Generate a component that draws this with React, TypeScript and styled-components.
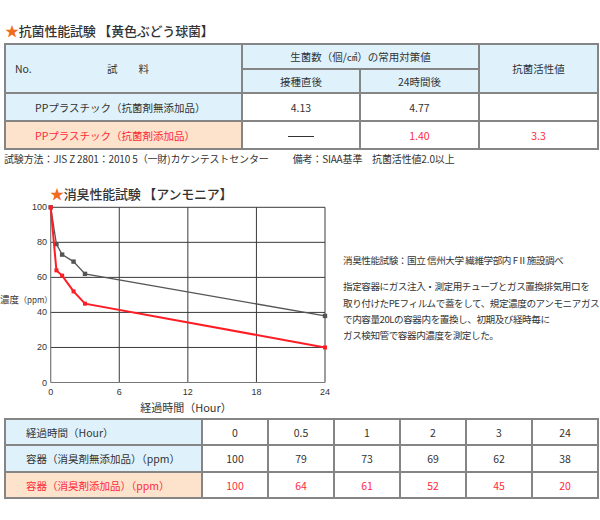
import React from "react";
import styled, { createGlobalStyle } from "styled-components";

const Global = createGlobalStyle`
  html, body { margin: 0; padding: 0; background: #fff; }
  body { font-family: "Noto Sans CJK JP", "Noto Sans", sans-serif; color: #333; }
`;

const RED = "#ff2a3c";
const BLUE = "#dff2fb";
const ORANGE = "#fde3cb";
const BORDER = "#858585";

const Page = styled.div`
  width: 600px;
  height: 520px;
  display: flex;
  flex-direction: column;
  overflow: hidden;
`;

const Title = styled.div<{ $indent: number; $top: number }>`
  margin: ${(p) => p.$top}px 0 0 ${(p) => p.$indent}px;
  height: 20px;
  line-height: 20px;
  font-size: 13px;
  letter-spacing: -0.2px;
  font-weight: 500;
  color: #333;
  white-space: nowrap;
`;

const Star = styled.span`
  color: #f26a1b;
  font-size: 14px;
`;

const Table = styled.table<{ $top: number; $w: number }>`
  margin: ${(p) => p.$top}px 0 0 4px;
  width: ${(p) => p.$w}px;
  border-collapse: collapse;
  table-layout: fixed;
  font-size: 10.5px;
  color: #333;
  & td, & th {
    border: 2px solid ${BORDER};
    padding: 0;
    font-weight: 400;
    text-align: center;
    white-space: nowrap;
  }
`;

const Cell = styled.td<{ $bg?: string; $red?: boolean; $left?: number; $h?: number }>`
  background: ${(p) => p.$bg || "#fff"};
  color: ${(p) => (p.$red ? RED : "#333")};
  height: ${(p) => (p.$h ? `${p.$h}px` : "auto")};
  && {
    text-align: ${(p) => (p.$left !== undefined ? "left" : "center")};
    padding-left: ${(p) => p.$left ?? 0}px;
  }
`;

const HeadSplit = styled.div`
  display: grid;
  grid-template-columns: 1fr auto 1fr;
  align-items: center;
  padding-left: 9px;
  & > span:first-child { justify-self: start; }
`;

const Dash = styled.span`
  display: inline-block;
  width: 26px;
  height: 1px;
  background: #333;
  vertical-align: middle;
`;

const Note = styled.div`
  margin: 1px 0 0 4px;
  height: 16px;
  line-height: 16px;
  font-size: 10px;
  letter-spacing: -0.15px;
  white-space: nowrap;
  display: flex;
  gap: 24px;
`;

const ChartRow = styled.div`
  display: flex;
  align-items: flex-start;
`;

const Desc = styled.div`
  margin-left: 8px;
  padding-top: 49px;
  font-size: 9.6px;
  letter-spacing: -0.45px;
  line-height: 16.3px;
  color: #333;
  white-space: nowrap;
  display: flex;
  flex-direction: column;
  gap: 10px;
`;

const Para = styled.p`
  margin: 0;
`;

const hours = [0, 0.5, 1, 2, 3, 24];
const plain = [100, 79, 73, 69, 62, 38];
const added = [100, 64, 61, 52, 45, 20];

const X0 = 50.7;
const XS = (325 - 50.7) / 24;
const Y0 = 179.5;
const YS = (179.5 - 4.3) / 100;
const px = (h: number) => X0 + h * XS;
const py = (v: number) => Y0 - v * YS;

function Chart() {
  const pts = (arr: number[]) => arr.map((v, i) => `${px(hours[i])},${py(v)}`).join(" ");
  return (
    <svg width={335} height={213} viewBox="0 0 335 213" style={{ flex: "none" }}>
      {[20, 40, 60, 80, 100].map((v) => (
        <line key={v} x1={X0} x2={px(24)} y1={py(v)} y2={py(v)} stroke="#3a3a3a" strokeWidth={1} />
      ))}
      {[6, 12, 18, 24].map((h) => (
        <line key={h} x1={px(h)} x2={px(h)} y1={py(100)} y2={py(0)} stroke="#3a3a3a" strokeWidth={1} />
      ))}
      <line x1={X0} x2={X0} y1={py(100)} y2={py(0)} stroke="#777" strokeWidth={1.2} />
      <line x1={X0} x2={px(24)} y1={py(0)} y2={py(0)} stroke="#777" strokeWidth={1.2} />
      <g fontSize={9} fill="#333" fontFamily="'Liberation Sans', sans-serif">
        {[0, 20, 40, 60, 80, 100].map((v) => (
          <text key={v} x={47} y={py(v) + 3} textAnchor="end">{v}</text>
        ))}
        {[0, 6, 12, 18, 24].map((h) => (
          <text key={h} x={px(h)} y={192} textAnchor="middle">{h}</text>
        ))}
      </g>
      <polyline points={pts(plain)} fill="none" stroke="#555" strokeWidth={1.3} />
      {plain.map((v, i) => (
        <rect key={i} x={px(hours[i]) - 2.2} y={py(v) - 2.2} width={4.4} height={4.4} fill="#555" />
      ))}
      <polyline points={pts(added)} fill="none" stroke="#ff1d25" strokeWidth={2} />
      {added.map((v, i) => (
        <rect key={i} x={px(hours[i]) - 2} y={py(v) - 2} width={4} height={4} fill="#ff1d25" />
      ))}
      <text x={0} y={100} fontSize={9.5} fill="#333">
        濃度<tspan fontSize={8}>（ppm）</tspan>
      </text>
      <text x={186} y={209} fontSize={11} fill="#333" textAnchor="middle">
        経過時間（Hour）
      </text>
    </svg>
  );
}

export default function App() {
  return (
    <Page>
      <Global />
      <Title $indent={5} $top={20}>
        <Star>★</Star>抗菌性能試験 【黄色ぶどう球菌】
      </Title>
      <Table $top={3} $w={593}>
        <colgroup>
          <col style={{ width: 237 }} />
          <col style={{ width: 118 }} />
          <col style={{ width: 119 }} />
          <col style={{ width: 119 }} />
        </colgroup>
        <tbody>
          <tr>
            <Cell as="th" rowSpan={2} $bg={BLUE}>
              <HeadSplit>
                <span>No.</span>
                <span>試　　料</span>
                <span />
              </HeadSplit>
            </Cell>
            <Cell as="th" colSpan={2} $bg={BLUE} $h={23}>
              生菌数（個/㎠）の常用対策値
            </Cell>
            <Cell as="th" rowSpan={2} $bg={BLUE}>抗菌活性値</Cell>
          </tr>
          <tr>
            <Cell as="th" $bg={BLUE} $h={22}>接種直後</Cell>
            <Cell as="th" $bg={BLUE}>24時間後</Cell>
          </tr>
          <tr>
            <Cell $bg={BLUE} $left={29} $h={26}>PPプラスチック（抗菌剤無添加品）</Cell>
            <Cell>4.13</Cell>
            <Cell>4.77</Cell>
            <Cell />
          </tr>
          <tr>
            <Cell $bg={ORANGE} $left={29} $red $h={26}>PPプラスチック（抗菌剤添加品）</Cell>
            <Cell><Dash /></Cell>
            <Cell $red>1.40</Cell>
            <Cell $red>3.3</Cell>
          </tr>
        </tbody>
      </Table>
      <Note>
        <span>試験方法：JIS Z 2801：2010 5（一財)カケンテストセンター</span>
        <span>備考：SIAA基準　抗菌活性値2.0以上</span>
      </Note>
      <Title $indent={50} $top={16}>
        <Star>★</Star>消臭性能試験 【アンモニア】
      </Title>
      <ChartRow>
        <Chart />
        <Desc>
          <Para>消臭性能試験：国立 信州大学 繊維学部内 FⅡ施設調べ</Para>
          <Para>
            指定容器にガス注入・測定用チューブとガス置換排気用口を
            <br />
            取り付けたPEフィルムで蓋をして、規定濃度のアンモニアガス
            <br />
            で内容量20Lの容器内を置換し、初期及び経時毎に
            <br />
            ガス検知管で容器内濃度を測定した。
          </Para>
        </Desc>
      </ChartRow>
      <Table $top={2} $w={593}>
        <colgroup>
          <col style={{ width: 197 }} />
          {[66, 66, 66, 66, 66, 66].map((w, i) => (
            <col key={i} style={{ width: w }} />
          ))}
        </colgroup>
        <tbody>
          <tr>
            <Cell $bg={BLUE} $left={20} $h={24}>経過時間（Hour）</Cell>
            {hours.map((h) => (
              <Cell key={h}>{h}</Cell>
            ))}
          </tr>
          <tr>
            <Cell $bg={BLUE} $left={20} $h={25}>容器（消臭剤無添加品）（ppm）</Cell>
            {plain.map((v, i) => (
              <Cell key={i}>{v}</Cell>
            ))}
          </tr>
          <tr>
            <Cell $bg={ORANGE} $left={20} $red $h={24}>容器（消臭剤添加品）（ppm）</Cell>
            {added.map((v, i) => (
              <Cell key={i} $red>{v}</Cell>
            ))}
          </tr>
        </tbody>
      </Table>
    </Page>
  );
}
